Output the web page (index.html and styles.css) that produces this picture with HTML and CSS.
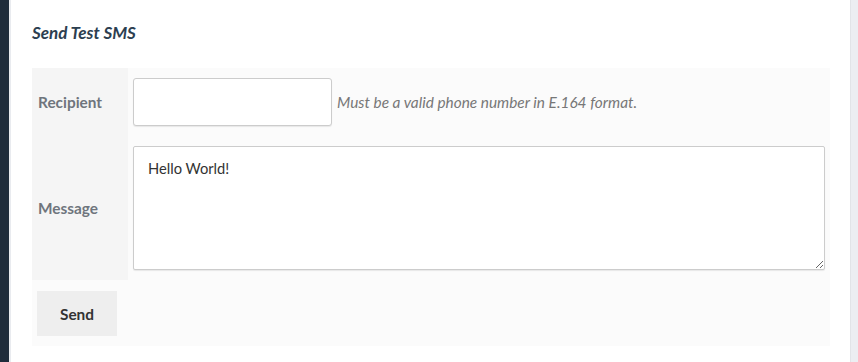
FILE: index.html
```html
<!DOCTYPE html>
<html>
<head>
<meta charset="utf-8">
<link rel="stylesheet" href="styles.css">
</head>
<body>
<div class="page">
  <div class="sidebar"></div>
  <main class="main">
    <h2 class="title">Send Test SMS</h2>
    <table class="form-table">
      <tr>
        <th class="label">Recipient</th>
        <td class="field">
          <div class="inline">
            <input class="text-input" type="text">
            <span class="help">Must be a valid phone number in E.164 format.</span>
          </div>
        </td>
      </tr>
      <tr>
        <th class="label">Message</th>
        <td class="field"><textarea class="textarea">Hello World!</textarea></td>
      </tr>
      <tr>
        <td class="actions" colspan="2"><button class="btn">Send</button></td>
      </tr>
    </table>
  </main>
  <div class="scrollbar"></div>
</div>
</body>
</html>
```
FILE: styles.css
```css
html, body {
  margin: 0;
  padding: 0;
  background: #ffffff;
}
body {
  font-family: Lato, "Open Sans", sans-serif;
  color: #333;
}
.page {
  display: flex;
  height: 362px;
}
.sidebar {
  width: 9px;
  background: #1f2c3b;
  border-right: 2px solid #e9ebef;
  flex: none;
}
.main {
  flex: 1;
  padding: 22px 20px 0 21px;
}
.scrollbar {
  width: 7px;
  flex: none;
  background: #eceef2;
  border-left: 1px solid #e2e4e8;
}
.title {
  margin: 0 0 24px;
  font-size: 17px;
  line-height: 22px;
  font-style: italic;
  font-weight: 700;
  color: #2c3e50;
}
.form-table {
  width: 100%;
  border-collapse: collapse;
  background: #fbfbfb;
}
.label {
  width: 90px;
  padding: 0 0 0 6px;
  text-align: left;
  background: #f5f5f5;
  font-size: 15.4px;
  font-weight: 700;
  color: #6f757d;
}
.field {
  padding: 10px 5px;
}
.inline {
  display: flex;
  align-items: center;
  gap: 5px;
}
.text-input {
  width: 199px;
  height: 48px;
  box-sizing: border-box;
  border: 1px solid #cccccc;
  border-radius: 3px;
  box-shadow: 0 1px 1px rgba(0,0,0,0.08);
  background: #fff;
  margin: 0;
}
.help {
  font-size: 15.4px;
  font-style: italic;
  color: #777;
}
.textarea {
  display: block;
  width: 100%;
  height: 124px;
  box-sizing: border-box;
  border: 1px solid #cccccc;
  border-radius: 2px;
  box-shadow: 0 1px 1px rgba(0,0,0,0.08);
  padding: 12px 14px;
  margin: 0;
  font-family: Lato, "Open Sans", sans-serif;
  font-size: 14.7px;
  color: #333;
  resize: vertical;
}
.actions {
  padding: 11px 5px 10px;
}
.btn {
  display: block;
  width: 80px;
  height: 45px;
  border: none;
  background: #eeeeee;
  font-family: Lato, "Open Sans", sans-serif;
  font-size: 15.4px;
  font-weight: 700;
  color: #333;
  padding: 0;
}
```
